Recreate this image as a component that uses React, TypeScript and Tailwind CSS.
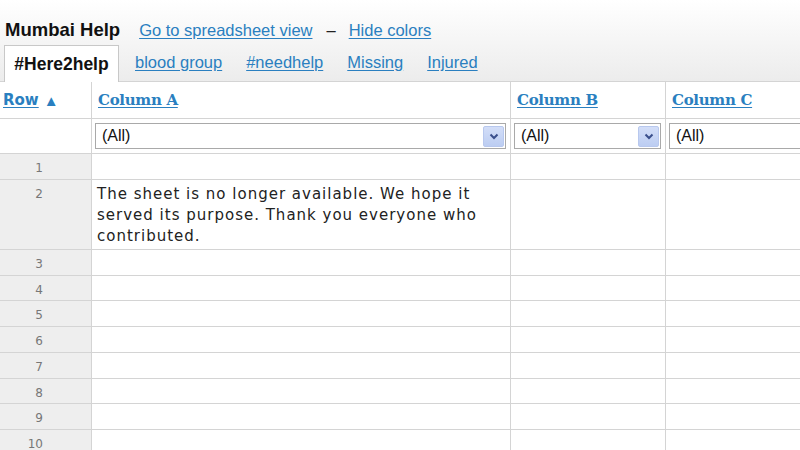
import React from "react";

const linkCls = "text-[#2a7fc0] underline underline-offset-2";

function Select() {
  return (
    <div className="flex h-[26px] items-center border border-[#a9a9a9] bg-white pl-[6px] pr-[1px]">
      <span className="flex-1 text-[16px] text-[#111] font-['Liberation_Sans',Arial,sans-serif]">(All)</span>
      <span className="flex h-[21px] w-[21px] items-center justify-center rounded-[2px] border border-[#b8c8ee] bg-gradient-to-b from-[#d3def8] to-[#bccdf2]">
        <svg width="10" height="7" viewBox="0 0 10 7">
          <path d="M1.5 1.5 L5 5 L8.5 1.5" fill="none" stroke="#3a4f8c" strokeWidth="2" />
        </svg>
      </span>
    </div>
  );
}

export default function App() {
  const rows = [1, 2, 3, 4, 5, 6, 7, 8, 9, 10];
  const heights: Record<number, string> = {
    1: "h-[26px]",
    2: "h-[70px]",
    3: "h-[26px]",
    4: "h-[25px]",
    5: "h-[26px]",
    6: "h-[26px]",
    7: "h-[26px]",
    8: "h-[25px]",
    9: "h-[26px]",
    10: "h-[26px]",
  };
  return (
    <div className="h-[450px] w-[800px] overflow-hidden bg-white font-['Liberation_Sans',Arial,sans-serif]">
      <div className="bg-gradient-to-b from-white to-[#ececec] pt-[16px]">
        <div className="flex items-baseline pl-[5px] h-[26px]">
          <span className="text-[18.5px] font-bold text-[#111]">Mumbai Help</span>
          <a className={`${linkCls} ml-[19px] text-[16.5px]`}>Go to spreadsheet view</a>
          <span className="ml-[14px] text-[16.5px] text-[#222]">–</span>
          <a className={`${linkCls} ml-[13px] text-[16.5px]`}>Hide colors</a>
        </div>
        <div className="flex items-end pl-[4px] pt-[2px] h-[39px]">
          <div className="flex h-[37px] w-[115px] items-center justify-center border border-b-0 border-[#c8c8c8] bg-white text-[17.5px] font-bold text-[#111] -mb-px relative">
            #Here2help
          </div>
          <div className="flex h-[37px] items-center text-[16.5px]">
            <a className={`${linkCls} ml-[16px]`}>blood group</a>
            <a className={`${linkCls} ml-[24px]`}>#needhelp</a>
            <a className={`${linkCls} ml-[24px]`}>Missing</a>
            <a className={`${linkCls} ml-[24px]`}>Injured</a>
          </div>
        </div>
      </div>
      <div className="grid grid-cols-[92px_419px_155px_1fr] border-t border-[#d4d4d4]">
        {/* header row */}
        <div className="flex h-[37px] items-center border-b border-r border-[#d4d4d4] pl-[3px]">
          <a className={`${linkCls} text-[15px] font-bold font-['DejaVu_Sans',Verdana,sans-serif]`}>Row</a>
          <span className="ml-[5px] text-[15px] leading-none text-[#2a7fc0]">▲</span>
        </div>
        {["Column A", "Column B", "Column C"].map((c, i) => (
          <div key={c} className={`flex h-[37px] items-center border-b border-[#d4d4d4] pl-[6px] ${i < 2 ? "border-r" : ""}`}>
            <a className={`${linkCls} text-[15px] font-bold font-['DejaVu_Serif',Georgia,serif] tracking-[-0.3px]`}>{c}</a>
          </div>
        ))}
        {/* filter row */}
        <div className="h-[35px] border-b border-r border-[#d4d4d4]" />
        <div className="h-[35px] border-b border-r border-[#d4d4d4] pl-[3px] pr-[4px] pt-[4px]"><Select /></div>
        <div className="h-[35px] border-b border-r border-[#d4d4d4] pl-[3px] pr-[4px] pt-[4px]"><Select /></div>
        <div className="h-[35px] border-b border-[#d4d4d4] pl-[3px] pt-[4px] -mr-[60px]"><Select /></div>
        {rows.map((r) => {
          const h = heights[r];
          return (
            <React.Fragment key={r}>
              <div className={`${h} border-b border-r border-[#d4d4d4] bg-[#eeeeee] pr-[48px] pt-[5px] text-right text-[12px] text-[#777] font-['DejaVu_Sans',Verdana,sans-serif]`}>
                {r}
              </div>
              <div className={`${h} border-b border-r border-[#d4d4d4] pl-[5px] pr-[6px] pt-[4px] text-[15px] leading-[21px] tracking-[1px] text-[#222] font-['DejaVu_Sans',Verdana,sans-serif]`}>
                {r === 2 ? "The sheet is no longer available. We hope it served its purpose. Thank you everyone who contributed." : ""}
              </div>
              <div className={`${h} border-b border-r border-[#d4d4d4]`} />
              <div className={`${h} border-b border-[#d4d4d4]`} />
            </React.Fragment>
          );
        })}
      </div>
    </div>
  );
}
